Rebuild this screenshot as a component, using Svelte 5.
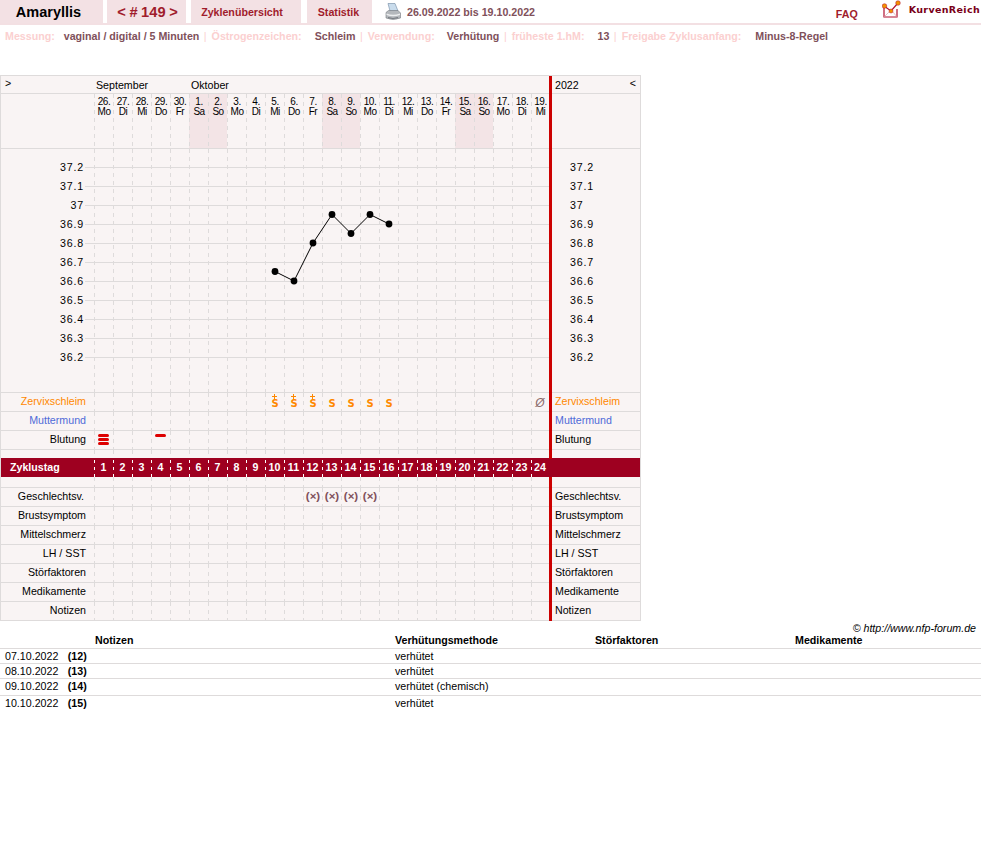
<script>
  const days = [
    ['26.', 'Mo'], ['27.', 'Di'], ['28.', 'Mi'], ['29.', 'Do'], ['30.', 'Fr'], ['1.', 'Sa'], ['2.', 'So'], ['3.', 'Mo'],
    ['4.', 'Di'], ['5.', 'Mi'], ['6.', 'Do'], ['7.', 'Fr'], ['8.', 'Sa'], ['9.', 'So'], ['10.', 'Mo'], ['11.', 'Di'],
    ['12.', 'Mi'], ['13.', 'Do'], ['14.', 'Fr'], ['15.', 'Sa'], ['16.', 'So'], ['17.', 'Mo'], ['18.', 'Di'], ['19.', 'Mi']
  ]
  const temps = ['37.2', '37.1', '37', '36.9', '36.8', '36.7', '36.6', '36.5', '36.4', '36.3', '36.2']
  const points = [[275, 271.5], [294, 281], [313, 243], [332, 214.5], [351, 233.5], [370, 214.5], [389, 224]]
  const empty = Array(24).fill(null)

  // index = cycle day - 1
  const mucus = { 9: 'S+', 10: 'S+', 11: 'S+', 12: 'S', 13: 'S', 14: 'S', 15: 'S', 23: 'dry' }
  const bleeding = { 0: 3, 3: 1 }
  const sex = [11, 12, 13, 14]

  const lowerRows = ['Brustsymptom', 'Mittelschmerz', 'LH / SST', 'Störfaktoren', 'Medikamente', 'Notizen']

  const notes = [
    { date: '07.10.2022', day: 12, method: 'verhütet' },
    { date: '08.10.2022', day: 13, method: 'verhütet' },
    { date: '09.10.2022', day: 14, method: 'verhütet (chemisch)', tall: true },
    { date: '10.10.2022', day: 15, method: 'verhütet' }
  ]
</script>

<div class="nav">
  <div class="tab name">Amaryllis</div>
  <div class="tab cycle">&lt; # 149 &gt;</div>
  <div class="tab overview">Zyklenübersicht</div>
  <div class="tab stats">Statistik</div>
  <svg class="printer" width="16" height="18" viewBox="0 0 16 18">
    <path d="M3 0.5 L10 0.5 L13 8 L5 8 Z" fill="#c9dcec" stroke="#7f97ad" stroke-width=".7" />
    <path d="M1 9.5 L3.5 7.5 H13 L15.5 10 V15 Q8 18 1 15 Z" fill="#b4b8bc" stroke="#777c82" stroke-width=".6" />
    <path d="M1.5 10.5 Q8 13 15 10.5 V12 Q8 14.5 1.5 12 Z" fill="#eceeef" />
    <path d="M3 14.5 Q8 16.5 13 14.5" fill="none" stroke="#666b71" stroke-width=".8" />
  </svg>
  <div class="range">26.09.2022 bis 19.10.2022</div>
  <div class="faq">FAQ</div>
  <svg class="logo" width="20" height="19" viewBox="0 0 20 19">
    <path d="M2 8 V17 H15 V9" fill="#fff" stroke="#b01030" stroke-width="1.2" />
    <path d="M2 17 L7 12 M15 17 L11 12" fill="none" stroke="#e0a0a8" stroke-width=".7" />
    <path d="M2 6 L9 11 L16 3" fill="none" stroke="#b01030" stroke-width="1.2" />
    <circle cx="2.5" cy="6" r="2.3" fill="#f39200" stroke="#b01030" stroke-width=".5" />
    <circle cx="9" cy="11" r="2" fill="#f39200" stroke="#b01030" stroke-width=".5" />
    <circle cx="16" cy="3" r="2.3" fill="#f39200" stroke="#b01030" stroke-width=".5" />
  </svg>
  <div class="brand">KurvenReich</div>
</div>

<div class="info">
  <span class="key">Messung:</span><span class="val first">vaginal / digital / 5 Minuten</span>
  <span class="sep">|</span><span class="key">Östrogenzeichen:</span><span class="val estro">Schleim</span>
  <span class="sep">|</span><span class="key">Verwendung:</span><span class="val use">Verhütung</span>
  <span class="sep">|</span><span class="key">früheste 1.hM:</span><span class="val early">13</span>
  <span class="sep">|</span><span class="key">Freigabe Zyklusanfang:</span><span class="val release">Minus-8-Regel</span>
</div>

<div class="chart">
  <div class="row months">
    <div class="label toggle">&gt;</div>
    <div class="month sep-month">September</div>
    <div class="month oct">Oktober</div>
    <div class="bar"></div>
    <div class="side year"><span>2022</span><span>&lt;</span></div>
  </div>

  <div class="row dates">
    <div class="label"></div>
    {#each days as d}
      <div class="c date" class:weekend={d[1] === 'Sa' || d[1] === 'So'}>
        <span>{d[0]}</span><span>{d[1]}</span>
      </div>
    {/each}
    <div class="bar"></div>
    <div class="side"></div>
  </div>

  <div class="row plot">
    <div class="temps left">
      {#each temps as t}<span>{t}</span>{/each}
    </div>
    {#each empty as _}<div class="c"></div>{/each}
    <div class="bar"></div>
    <div class="temps right">
      {#each temps as t}<span>{t}</span>{/each}
    </div>
    <svg class="curve" width="464" height="243" viewBox="85 149 464 243">
      {#each temps as _, i}
        <line x1="85" x2="549" y1={167.5 + i * 19} y2={167.5 + i * 19} stroke="#dedbdb" />
      {/each}
      <polyline points={points.map((p) => p.join(',')).join(' ')} fill="none" stroke="#000" />
      {#each points as p}
        <circle cx={p[0]} cy={p[1]} r="3.4" fill="#000" />
      {/each}
    </svg>
  </div>

  <div class="row">
    <div class="label orange">Zervixschleim</div>
    {#each empty as _, i}
      <div class="c mark">
        {#if mucus[i] === 'S+'}
          <svg class="plus" width="5" height="5" viewBox="0 0 5 5"><path d="M2.5 0V5M0 2.5H5" stroke="#ff8800" /></svg>
          <span class="s">S</span>
        {:else if mucus[i] === 'S'}
          <span class="s">S</span>
        {:else if mucus[i] === 'dry'}
          <span class="dry">Ø</span>
        {/if}
      </div>
    {/each}
    <div class="bar"></div>
    <div class="side orange">Zervixschleim</div>
  </div>

  <div class="row">
    <div class="label blue">Muttermund</div>
    {#each empty as _}<div class="c"></div>{/each}
    <div class="bar"></div>
    <div class="side blue">Muttermund</div>
  </div>

  <div class="row">
    <div class="label">Blutung</div>
    {#each empty as _, i}
      <div class="c blood">
        {#each Array(bleeding[i] || 0) as _b}<i></i>{/each}
      </div>
    {/each}
    <div class="bar"></div>
    <div class="side">Blutung</div>
  </div>

  <div class="row gap before">
    <div class="label"></div>
    {#each empty as _}<div class="c"></div>{/each}
    <div class="bar"></div>
    <div class="side"></div>
  </div>

  <div class="row cycle-days">
    <div class="label title">Zyklustag</div>
    {#each empty as _, i}<div class="c white">{i + 1}</div>{/each}
    <div></div>
    <div></div>
  </div>

  <div class="row gap after">
    <div class="label"></div>
    {#each empty as _}<div class="c"></div>{/each}
    <div class="bar"></div>
    <div class="side"></div>
  </div>

  <div class="row">
    <div class="label sv">Geschlechtsv.</div>
    {#each empty as _, i}
      <div class="c sex">{#if sex.includes(i)}(×){/if}</div>
    {/each}
    <div class="bar"></div>
    <div class="side">Geschlechtsv.</div>
  </div>

  {#each lowerRows as name}
    <div class="row">
      <div class="label">{name}</div>
      {#each empty as _}<div class="c"></div>{/each}
      <div class="bar"></div>
      <div class="side">{name}</div>
    </div>
  {/each}
</div>

<div class="copy">© http://www.nfp-forum.de</div>

<div class="notes">
  <div class="line head">
    <div></div><div>Notizen</div><div>Verhütungsmethode</div><div>Störfaktoren</div><div>Medikamente</div>
  </div>
  {#each notes as n}
    <div class="line" class:tall={n.tall}>
      <div>{n.date} <b>({n.day})</b></div><div></div><div>{n.method}</div><div></div><div></div>
    </div>
  {/each}
</div>

<style>
  :global(body) {
    font-family: "Liberation Sans", Arial, sans-serif;
    font-size: 10.67px;
    color: #000;
    background: #fff;
  }

  .nav {
    display: flex;
    align-items: stretch;
    height: 25px;
    box-sizing: border-box;
    border-bottom: 2px solid #f3e0e3;
    white-space: nowrap;
  }

  .tab {
    background: #f3e1e4;
    display: flex;
    align-items: center;
    justify-content: center;
    font-weight: bold;
    color: #a01c2c;
  }

  .name {
    width: 103px;
    margin-right: 4px;
    font-size: 14.5px;
    color: #000;
    padding-right: 6px;
    box-sizing: border-box;
  }

  .cycle {
    width: 79px;
    margin-right: 5px;
    padding-left: 2px;
    box-sizing: border-box;
    font-size: 14.67px;
    word-spacing: -0.5px;
  }

  .overview {
    width: 110px;
    margin-right: 6px;
    padding-right: 8px;
    box-sizing: border-box;
  }

  .stats {
    width: 65px;
    padding-right: 2px;
    box-sizing: border-box;
  }

  .printer {
    margin: 3px 6px 0 13px;
  }

  .range {
    line-height: 25px;
    font-weight: bold;
    color: #80505a;
  }

  .faq {
    margin-left: auto;
    padding-top: 8px;
    font-weight: bold;
    color: #a01c2c;
  }

  .logo {
    margin: 0 7px 0 24px;
  }

  .brand {
    margin-right: 1px;
    padding-top: 4px;
    font-family: "DejaVu Sans", sans-serif;
    font-size: 9.5px;
    font-weight: bold;
    letter-spacing: 0.35px;
    color: #7a0018;
  }

  .info {
    display: flex;
    height: 50px;
    padding: 5px 0 0 5px;
    box-sizing: border-box;
    font-weight: bold;
    line-height: 13px;
    white-space: nowrap;
  }

  .key {
    color: #fbd0d0;
  }

  .val {
    color: #80505a;
  }

  .sep {
    color: #fbd0d0;
    font-weight: normal;
    margin: 0 5px 0 4.5px;
  }

  .first { margin-left: 9px; }
  .estro { margin-left: 13px; }
  .use { margin-left: 12px; }
  .early { margin-left: 13px; }
  .release { margin-left: 14px; }

  .chart {
    width: 641px;
    box-sizing: border-box;
    border: 1px solid #dedbdb;
    border-bottom: 0;
    background: #f9f4f4;
  }

  .row {
    display: grid;
    grid-template-columns: 93px repeat(23, 19px) 18px 3px 88px;
    height: 19px;
    box-sizing: border-box;
    border-bottom: 1px solid #dedbdb;
    line-height: 17px;
  }

  .label {
    text-align: right;
    padding-right: 8px;
    white-space: nowrap;
  }

  .label.sv {
    padding-right: 10px;
  }

  .side {
    padding-left: 3px;
    white-space: nowrap;
  }

  .bar {
    background: #cc0000;
    margin-bottom: -1px;
  }

  .c {
    background: linear-gradient(#dedbdb 50%, transparent 50%) 0 0 / 1px 8px repeat-y;
  }

  .orange { color: #ff8800; }
  .blue { color: #4f6bd8; }

  .months {
    height: 18px;
  }

  .toggle {
    text-align: left;
    padding: 0 0 0 4px;
    line-height: 14px;
  }

  .month {
    padding-left: 2px;
    line-height: 19px;
  }

  .sep-month { grid-column: span 5; }
  .oct { grid-column: span 19; }

  .year {
    display: flex;
    justify-content: space-between;
    padding-right: 4px;
    line-height: 19px;
  }

  .year span:last-child {
    line-height: 14px;
  }

  .dates {
    height: 55px;
  }

  .date {
    display: flex;
    flex-direction: column;
    align-items: center;
    padding: 3px 0 0 1px;
    box-sizing: border-box;
    font-size: 10px;
    line-height: 10px;
    letter-spacing: -0.5px;
  }

  .weekend {
    background-color: #f3e4e6;
  }

  .plot {
    position: relative;
    height: 244px;
  }

  .temps {
    display: flex;
    flex-direction: column;
    padding-top: 9px;
    letter-spacing: 0.8px;
  }

  .temps span {
    height: 19px;
    line-height: 19px;
  }

  .temps.left {
    align-items: flex-end;
    padding-right: 10px;
  }

  .temps.right {
    padding-left: 18px;
  }

  .curve {
    position: absolute;
    left: 84px;
    top: 0;
  }

  .mark {
    position: relative;
    text-align: center;
    color: #ff8800;
  }

  .s {
    display: block;
    padding: 5px 0 0 1px;
    font-family: "DejaVu Sans", sans-serif;
    font-size: 10px;
    font-weight: bold;
    line-height: 12px;
  }

  .plus {
    position: absolute;
    left: 7px;
    top: 1px;
  }

  .dry {
    display: block;
    padding-top: 2px;
    font-size: 12px;
    color: #8a6a6a;
    font-style: italic;
  }

  .blood {
    display: flex;
    flex-direction: column;
    align-items: center;
    gap: 1px;
    padding-top: 3px;
  }

  .blood i {
    width: 11px;
    height: 3px;
    border-radius: 2px;
    background: #dd0000;
  }

  .gap {
    height: 8px;
    border-bottom: 0;
  }

  .gap.after {
    height: 11px;
    border-bottom: 1px solid #dedbdb;
  }

  .cycle-days {
    background: #9e0020;
    border-bottom: 0;
    color: #fff;
    font-weight: bold;
    line-height: 19px;
  }

  .title {
    text-align: left;
    padding-left: 9px;
  }

  .white {
    background: linear-gradient(#fff 50%, transparent 50%) 0 2px / 1px 7px repeat-y;
    text-align: center;
  }

  .sex {
    text-align: center;
    font-size: 11.5px;
    color: #80505a;
    font-weight: bold;
    white-space: nowrap;
    padding-left: 1px;
  }

  .copy {
    padding: 1px 5px 0 0;
    height: 13px;
    line-height: 12px;
    text-align: right;
    font-style: italic;
    box-sizing: border-box;
  }

  .line {
    display: grid;
    grid-template-columns: 95px 300px 200px 200px 186px;
    height: 15px;
    box-sizing: border-box;
    border-bottom: 1px solid #dedbdb;
    line-height: 14px;
  }

  .line > div:first-child {
    padding-left: 5px;
    word-spacing: 6.5px;
    white-space: nowrap;
  }

  .line.tall {
    height: 17px;
  }

  .line:last-child {
    border-bottom: 0;
  }

  .head {
    font-weight: bold;
    height: 15px;
    line-height: 13px;
  }
</style>
